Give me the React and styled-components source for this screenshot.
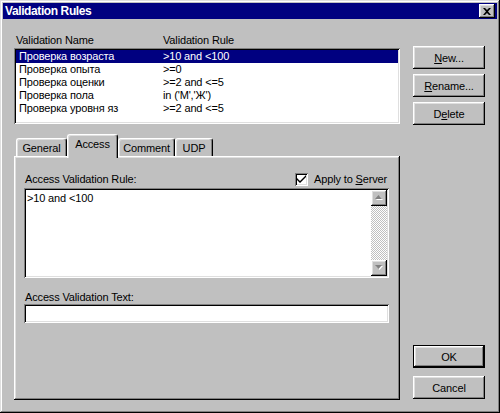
import React from "react";
import styled, { createGlobalStyle, css } from "styled-components";

const GlobalStyle = createGlobalStyle`
    html, body {
        margin: 0;
        padding: 0;
        background: #c0c0c0;
    }
    body {
        font-family: "Liberation Sans", Arial, sans-serif;
        font-size: 11px;
        letter-spacing: -0.15px;
        color: #000;
    }
`;

const raised = css`
    box-shadow: inset -1px -1px #000, inset 1px 1px #fff,
        inset -2px -2px #808080, inset 2px 2px #dfdfdf;
`;

const sunken = css`
    box-shadow: inset 1px 1px #808080, inset -1px -1px #fff,
        inset 2px 2px #000, inset -2px -2px #dfdfdf;
`;

const Window = styled.div`
    width: 500px;
    height: 413px;
    box-sizing: border-box;
    padding: 3px;
    display: flex;
    flex-direction: column;
    background: #c0c0c0;
    box-shadow: inset -1px -1px #000, inset 1px 1px #dfdfdf,
        inset -2px -2px #808080, inset 2px 2px #fff;
`;

const TitleBar = styled.div`
    height: 16px;
    display: flex;
    align-items: center;
    justify-content: space-between;
    padding: 0 2px 0 2px;
    background: #000080;
`;

const Title = styled.span`
    color: #fff;
    font-weight: bold;
    font-size: 12px;
    letter-spacing: -0.4px;
`;

const CloseButton = styled.div`
    width: 16px;
    height: 14px;
    display: flex;
    align-items: center;
    justify-content: center;
    background: #c0c0c0;
    ${raised};
`;

const Body = styled.div`
    flex: 1;
    display: flex;
    gap: 13px;
    padding: 13px 12px 10px 11px;
`;

const LeftColumn = styled.div`
    width: 386px;
    display: flex;
    flex-direction: column;
`;

const HeaderRow = styled.div`
    height: 16px;
    display: grid;
    grid-template-columns: 147px 1fr;
    align-items: center;
    padding-left: 2px;
`;

const ListBox = styled.div`
    height: 76px;
    box-sizing: border-box;
    padding: 2px;
    background: #fff;
    ${sunken};
`;

const ListRow = styled.div`
    height: 13px;
    line-height: 13px;
    display: grid;
    grid-template-columns: 144px 1fr;
    padding-left: 3px;
    white-space: nowrap;
    background: ${(p) => (p.$selected ? "#000080" : "transparent")};
    color: ${(p) => (p.$selected ? "#fff" : "#000")};
`;

const TabStrip = styled.div`
    margin-top: 10px;
    height: 22px;
    display: flex;
    align-items: flex-end;
    padding-left: 2px;
`;

const Tab = styled.div`
    position: relative;
    box-sizing: border-box;
    height: ${(p) => (p.$active ? "24px" : "18px")};
    width: ${(p) => p.$width}px;
    margin-bottom: ${(p) => (p.$active ? "-2px" : "0")};
    padding-bottom: ${(p) => (p.$active ? "5px" : "0")};
    z-index: ${(p) => (p.$active ? 1 : 0)};
    display: flex;
    align-items: center;
    justify-content: center;
    background: #c0c0c0;
    border-top: 1px solid #fff;
    border-left: 1px solid #fff;
    border-right: 1px solid #000;
    border-radius: 3px 3px 0 0;
    box-shadow: inset -1px 0 #808080, inset 1px 1px #dfdfdf;
`;

const TabPanel = styled.div`
    flex: 1;
    display: flex;
    flex-direction: column;
    padding: 14px 11px 0 10px;
    box-shadow: inset -1px -1px #000, inset 1px 1px #fff,
        inset -2px -2px #808080, inset 2px 2px #dfdfdf;
`;

const FieldHeader = styled.div`
    height: 18px;
    display: flex;
    align-items: center;
    justify-content: space-between;
    padding-left: 1px;
`;

const CheckRow = styled.div`
    display: flex;
    align-items: center;
    gap: 6px;
    padding-right: 2px;
`;

const CheckBox = styled.div`
    width: 13px;
    height: 13px;
    box-sizing: border-box;
    display: flex;
    align-items: center;
    justify-content: center;
    background: #fff;
    ${sunken};
`;

const Key = styled.span`
    text-decoration: underline;
`;

const TextArea = styled.div`
    height: 90px;
    box-sizing: border-box;
    padding: 2px;
    display: flex;
    background: #fff;
    ${sunken};
`;

const TextContent = styled.div`
    flex: 1;
    padding: 2px 1px;
    line-height: 13px;
`;

const ScrollBar = styled.div`
    width: 16px;
    display: flex;
    flex-direction: column;
`;

const ScrollButton = styled.div`
    width: 16px;
    height: 16px;
    display: flex;
    align-items: center;
    justify-content: center;
    background: #c0c0c0;
    ${raised};
`;

const ScrollTrack = styled.div`
    flex: 1;
    background-image: repeating-conic-gradient(#c0c0c0 0 25%, #fff 0 50%);
    background-size: 2px 2px;
`;

const FieldLabel = styled.div`
    margin-top: 12px;
    height: 14px;
    line-height: 14px;
    padding-left: 1px;
`;

const TextInput = styled.div`
    height: 19px;
    background: #fff;
    ${sunken};
`;

const RightColumn = styled.div`
    width: 72px;
    display: flex;
    flex-direction: column;
    justify-content: space-between;
    padding: 14px 0 1px;
`;

const ButtonGroup = styled.div`
    display: flex;
    flex-direction: column;
    gap: ${(p) => p.$gap}px;
`;

const Button = styled.div`
    height: 23px;
    display: flex;
    align-items: center;
    justify-content: center;
    background: #c0c0c0;
    ${raised};
    ${(p) =>
        p.$default &&
        css`
            box-shadow: inset 0 0 0 1px #000, inset -2px -2px #000,
                inset 2px 2px #fff, inset -3px -3px #808080,
                inset 3px 3px #dfdfdf;
        `}
`;

const rules = [
    ["Проверка возраста", ">10 and <100"],
    ["Проверка опыта", ">=0"],
    ["Проверка оценки", ">=2 and <=5"],
    ["Проверка пола", "in ('М','Ж')"],
    ["Проверка уровня яз", ">=2 and <=5"],
];

const tabs = [
    { label: "General", width: 51 },
    { label: "Access", width: 51, active: true },
    { label: "Comment", width: 57 },
    { label: "UDP", width: 38 },
];

function Arrow({ up }) {
    return (
        <svg width="8" height="6" viewBox="0 0 8 6">
            <polygon
                points={up ? "4.5,1 8,5 1,5" : "1,1 8,1 4.5,5"}
                fill="#fff"
            />
            <polygon
                points={up ? "3.5,0 7,4 0,4" : "0,0 7,0 3.5,4"}
                fill="#808080"
            />
        </svg>
    );
}

function App() {
    return (
        <Window>
            <GlobalStyle />
            <TitleBar>
                <Title>Validation Rules</Title>
                <CloseButton>
                    <svg width="8" height="7" viewBox="0 0 8 7">
                        <path
                            d="M0 0h2l2 2 2-2h2L5 3.5 8 7H6L4 5 2 7H0l3-3.5z"
                            fill="#000"
                        />
                    </svg>
                </CloseButton>
            </TitleBar>

            <Body>
                <LeftColumn>
                    <HeaderRow>
                        <span>Validation Name</span>
                        <span>Validation Rule</span>
                    </HeaderRow>
                    <ListBox>
                        {rules.map(([name, rule], i) => (
                            <ListRow key={name} $selected={i === 0}>
                                <span>{name}</span>
                                <span>{rule}</span>
                            </ListRow>
                        ))}
                    </ListBox>

                    <TabStrip>
                        {tabs.map((t) => (
                            <Tab key={t.label} $active={t.active} $width={t.width}>
                                {t.label}
                            </Tab>
                        ))}
                    </TabStrip>
                    <TabPanel>
                        <FieldHeader>
                            <span>Access Validation Rule:</span>
                            <CheckRow>
                                <CheckBox>
                                    <svg width="9" height="8" viewBox="0 0 9 8">
                                        <path d="M0 3l3 3 6-6v2L3 8 0 5z" fill="#000" />
                                    </svg>
                                </CheckBox>
                                <span>
                                    Apply to <Key>S</Key>erver
                                </span>
                            </CheckRow>
                        </FieldHeader>
                        <TextArea>
                            <TextContent>&gt;10 and &lt;100</TextContent>
                            <ScrollBar>
                                <ScrollButton>
                                    <Arrow up />
                                </ScrollButton>
                                <ScrollTrack />
                                <ScrollButton>
                                    <Arrow />
                                </ScrollButton>
                            </ScrollBar>
                        </TextArea>
                        <FieldLabel>Access Validation Text:</FieldLabel>
                        <TextInput />
                    </TabPanel>
                </LeftColumn>

                <RightColumn>
                    <ButtonGroup $gap={5}>
                        <Button>
                            <span>
                                <Key>N</Key>ew...
                            </span>
                        </Button>
                        <Button>
                            <span>
                                <Key>R</Key>ename...
                            </span>
                        </Button>
                        <Button>
                            <span>
                                D<Key>e</Key>lete
                            </span>
                        </Button>
                    </ButtonGroup>
                    <ButtonGroup $gap={8}>
                        <Button $default>OK</Button>
                        <Button>Cancel</Button>
                    </ButtonGroup>
                </RightColumn>
            </Body>
        </Window>
    );
}

export default App;
